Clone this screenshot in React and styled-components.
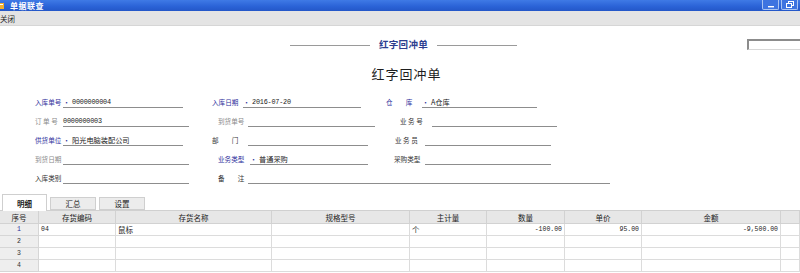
import React from "react";
import styled, { createGlobalStyle } from "styled-components";

const CJK = `"Noto Sans CJK SC", "Noto Sans", sans-serif`;
const MONO = `"Liberation Mono", "DejaVu Sans Mono", monospace`;

const LABEL_COLOR = {
  key: "#2e2f9c",
  dim: "#8a8a8a",
  plain: "#333333",
};

const COLUMNS = [
  { title: "序号", width: 39 },
  { title: "存货编码", width: 77 },
  { title: "存货名称", width: 156 },
  { title: "规格型号", width: 138 },
  { title: "主计量", width: 77 },
  { title: "数量", width: 78 },
  { title: "单价", width: 77 },
  { title: "金额", width: 139 },
  { title: "", width: 19 },
];

const ROWS = [
  ["1", "04", "鼠标", "", "个", "-100.00", "95.00", "-9,500.00", ""],
  ["2", "", "", "", "", "", "", "", ""],
  ["3", "", "", "", "", "", "", "", ""],
  ["4", "", "", "", "", "", "", "", ""],
];

const NUMERIC = [5, 6, 7];

const FORM = [
  [
    { label: "入库单号", kind: "key", star: true, value: "0000000004", labelW: 28, lineW: 120 },
    { label: "入库日期", kind: "key", star: true, value: "2016-07-20", labelW: 31, lineW: 118 },
    { label: "仓　　库", kind: "key", star: true, value: "A仓库", cjk: true, indent: 6, labelW: 36, lineW: 115 },
  ],
  [
    { label: "订 单 号", kind: "dim", value: "0000000003", labelW: 28, lineW: 126 },
    { label: "到货单号", kind: "dim", indent: 6, labelW: 30, lineW: 127 },
    { label: "业 务 号", kind: "plain", indent: 20, labelW: 32, lineW: 125 },
  ],
  [
    { label: "供货单位", kind: "key", star: true, value: "阳光电脑装配公司", cjk: true, labelW: 28, lineW: 120 },
    { label: "部　　门", kind: "plain", labelW: 36, lineW: 120 },
    { label: "业 务 员", kind: "plain", indent: 15, labelW: 30, lineW: 126 },
  ],
  [
    { label: "到货日期", kind: "dim", labelW: 28, lineW: 126 },
    { label: "业务类型", kind: "key", star: true, value: "普通采购", cjk: true, indent: 6, labelW: 32, lineW: 118 },
    { label: "采购类型", kind: "plain", indent: 14, labelW: 31, lineW: 126 },
  ],
  [
    { label: "入库类别", kind: "plain", labelW: 28, lineW: 126 },
    { label: "备　　注", kind: "plain", indent: 6, labelW: 30, lineW: 362 },
  ],
];

const GlobalStyle = createGlobalStyle`
  html, body {
    margin: 0;
    padding: 0;
    background: #ffffff;
    overflow: hidden;
  }
  body {
    font-family: ${CJK};
  }
`;

function App() {
  return (
    <>
      <GlobalStyle />
      <Window>
        <TitleBar>
          <TitleLeft>
            <AppIcon viewBox="0 0 8 8">
              <rect x="0" y="1" width="6" height="6" fill="#f0b030" />
              <rect x="1" y="2" width="4" height="1" fill="#ffffff" />
            </AppIcon>
            <TitleText>单据联查</TitleText>
          </TitleLeft>
          <WinButtons>
            <WinButton>
              <svg width="8" height="6" viewBox="0 0 8 6">
                <rect x="1" y="4" width="6" height="1.4" fill="#ffffff" />
              </svg>
            </WinButton>
            <WinButton>
              <svg width="8" height="7" viewBox="0 0 8 7">
                <rect x="2.5" y="0.5" width="5" height="4" fill="none" stroke="#ffffff" />
                <rect x="0.5" y="2.5" width="5" height="4" fill="#3d74e0" stroke="#ffffff" />
              </svg>
            </WinButton>
          </WinButtons>
        </TitleBar>

        <MenuBar>
          <MenuItem>关闭</MenuItem>
        </MenuBar>

        <Body>
          <CaptionRow>
            <CaptionLine />
            <Caption>红字回冲单</Caption>
            <CaptionLine />
            <Spacer />
            <SearchBox />
          </CaptionRow>

          <BigTitle>红字回冲单</BigTitle>

          <Form>
            {FORM.map((row, i) => (
              <FormRow key={i}>
                {row.map((f) => (
                  <Field key={f.label} $indent={f.indent || 0}>
                    <Label $kind={f.kind} $w={f.labelW}>{f.label}</Label>
                    <Line $w={f.lineW}>
                      {f.star && <Star>•</Star>}
                      {f.value && <Value $cjk={f.cjk}>{f.value}</Value>}
                    </Line>
                  </Field>
                ))}
              </FormRow>
            ))}
          </Form>

          <Tabs>
            <Tab $active>明细</Tab>
            <Tab>汇总</Tab>
            <Tab>设置</Tab>
          </Tabs>

          <Grid>
            {COLUMNS.map((c, i) => (
              <HeadCell key={i}>{c.title}</HeadCell>
            ))}
            {ROWS.map((row) =>
              row.map((v, ci) =>
                ci === 0 ? (
                  <IndexCell key={row[0] + ci} $first={v === "1"}>{v}</IndexCell>
                ) : (
                  <Cell key={row[0] + ci} $num={NUMERIC.includes(ci)} $mono={ci === 1}>
                    {v}
                  </Cell>
                )
              )
            )}
          </Grid>
        </Body>
      </Window>
    </>
  );
}

const Window = styled.div`
  display: flex;
  flex-direction: column;
  width: 800px;
  height: 273px;
  overflow: hidden;
  background: #ffffff;
`;

const TitleBar = styled.div`
  display: flex;
  align-items: center;
  justify-content: space-between;
  height: 11px;
  background: linear-gradient(#3f7ae6, #2a62d6 60%, #2457c8);
`;

const TitleLeft = styled.div`
  display: flex;
  align-items: center;
  margin-left: -2px;
  gap: 4px;
`;

const AppIcon = styled.svg`
  width: 8px;
  height: 8px;
`;

const TitleText = styled.span`
  color: #ffffff;
  font-size: 8px;
  font-weight: 700;
  line-height: 11px;
  letter-spacing: 0.5px;
`;

const WinButtons = styled.div`
  display: flex;
  gap: 2px;
  margin-right: 2px;
  align-self: flex-start;
`;

const WinButton = styled.div`
  display: flex;
  align-items: center;
  justify-content: center;
  width: 17px;
  height: 10px;
  background: #3d74e0;
  border: 1px solid #a9c4f2;
  border-top: none;
  box-sizing: border-box;
  border-radius: 0 0 2px 2px;
`;

const MenuBar = styled.div`
  display: flex;
  align-items: center;
  height: 15px;
  background: #e4e4e4;
  border-bottom: 1px solid #d6d6d6;
  box-sizing: border-box;
`;

const MenuItem = styled.span`
  margin-left: 0;
  font-size: 7.5px;
  color: #222222;
`;

const Body = styled.div`
  display: flex;
  flex-direction: column;
  flex: 1;
`;

const CaptionRow = styled.div`
  display: flex;
  align-items: center;
  height: 12px;
  margin-top: 12px;
  padding-left: 290px;
  gap: 9px;
`;

const CaptionLine = styled.div`
  width: 80px;
  height: 1px;
  margin-top: 2px;
  background: #9a9a9a;
`;

const Caption = styled.span`
  color: #2d3e8f;
  font-size: 9.5px;
  font-weight: 700;
  line-height: 12px;
  letter-spacing: 0.3px;
`;

const Spacer = styled.div`
  flex: 1;
`;

const SearchBox = styled.div`
  width: 53px;
  height: 11px;
  border: 1px solid #d8d8d8;
  border-top: 2px solid #8c8c8c;
  border-left: 2px solid #8c8c8c;
  border-right: none;
  box-sizing: border-box;
`;

const BigTitle = styled.div`
  margin-top: 16px;
  text-align: center;
  padding-left: 13px;
  color: #1e1e1e;
  font-size: 13px;
  line-height: 16px;
  letter-spacing: 1px;
`;

const Form = styled.div`
  display: flex;
  flex-direction: column;
  margin-top: 7px;
`;

const FormRow = styled.div`
  display: grid;
  grid-template-columns: 177px 168px 1fr;
  height: 19px;
  padding-left: 35px;
  align-items: end;
`;

const Field = styled.div`
  display: flex;
  align-items: flex-end;
  padding-left: ${(p) => p.$indent}px;
  white-space: nowrap;
`;

const Label = styled.span`
  width: ${(p) => p.$w}px;
  flex: none;
  color: ${(p) => LABEL_COLOR[p.$kind]};
  font-size: 6.6px;
  line-height: 10px;
  padding-bottom: 1px;
`;

const Line = styled.div`
  display: flex;
  flex: none;
  align-items: flex-end;
  width: ${(p) => p.$w}px;
  height: 11px;
  border-bottom: 1px solid #8d8d8d;
`;

const Star = styled.span`
  margin-left: 0;
  margin-right: 2px;
  color: #2e2f9c;
  font-size: 7px;
  line-height: 10px;
`;

const Value = styled.span`
  color: #1a1a1a;
  font-family: ${(p) => (p.$cjk ? CJK : MONO)};
  font-size: ${(p) => (p.$cjk ? 7.2 : 6.8)}px;
  line-height: 10px;
  letter-spacing: ${(p) => (p.$cjk ? 0 : -0.2)}px;
`;

const Tabs = styled.div`
  display: flex;
  align-items: flex-end;
  gap: 3px;
  height: 17px;
  margin-top: 9px;
  padding-left: 2px;
  border-bottom: 1px solid #d0d0d0;
`;

const Tab = styled.div`
  display: flex;
  align-items: center;
  justify-content: center;
  width: ${(p) => (p.$active ? 45 : 46)}px;
  height: ${(p) => (p.$active ? 17 : 13)}px;
  margin-bottom: ${(p) => (p.$active ? -1 : 0)}px;
  background: ${(p) => (p.$active ? "#ffffff" : "#ececec")};
  border: 1px solid #cfcfcf;
  border-bottom: ${(p) => (p.$active ? "none" : "1px solid #cfcfcf")};
  box-sizing: border-box;
  color: #222222;
  font-size: 7.5px;
  font-weight: ${(p) => (p.$active ? 700 : 400)};
`;

const Grid = styled.div`
  display: grid;
  grid-template-columns: ${COLUMNS.map((c) => `${c.width}px`).join(" ")};
  grid-template-rows: 13px repeat(4, 12px);
`;

const HeadCell = styled.div`
  display: flex;
  align-items: center;
  justify-content: center;
  background: #e7e7e7;
  border-right: 1px solid #d2d2d2;
  border-bottom: 1px solid #d2d2d2;
  box-sizing: border-box;
  color: #222222;
  font-size: 7.5px;
`;

const IndexCell = styled.div`
  display: flex;
  align-items: center;
  justify-content: center;
  background: #eeeeee;
  border-right: 1px solid #d6d6d6;
  border-bottom: 1px solid #d6d6d6;
  box-sizing: border-box;
  color: ${(p) => (p.$first ? "#2e2f9c" : "#333333")};
  font-family: ${MONO};
  font-size: 6.5px;
`;

const Cell = styled.div`
  display: flex;
  align-items: center;
  justify-content: ${(p) => (p.$num ? "flex-end" : "flex-start")};
  padding: 0 2px;
  border-right: 1px solid #dcdcdc;
  border-bottom: 1px solid #dcdcdc;
  box-sizing: border-box;
  color: #222222;
  font-family: ${(p) => (p.$num || p.$mono ? MONO : CJK)};
  font-size: ${(p) => (p.$num || p.$mono ? 6.5 : 7.5)}px;
  white-space: nowrap;
`;

export default App;
